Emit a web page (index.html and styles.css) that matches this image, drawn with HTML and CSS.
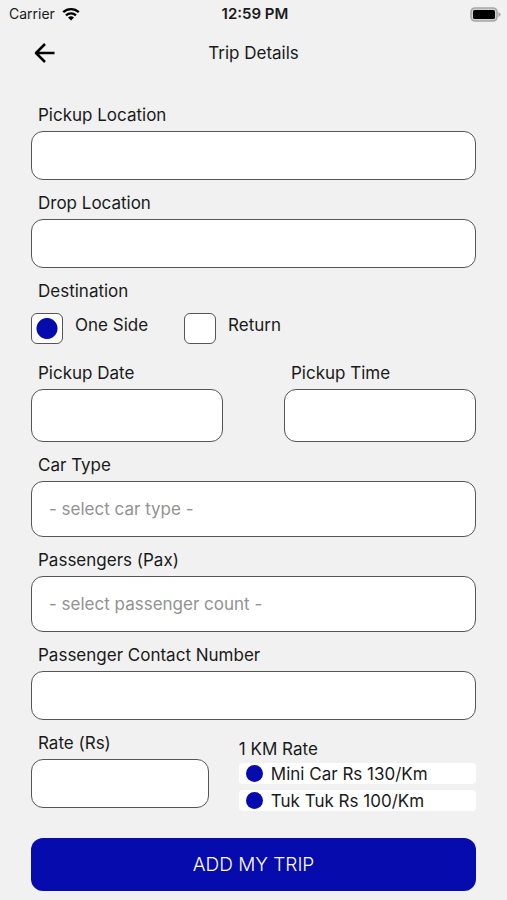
FILE: index.html
```html
<!DOCTYPE html>
<html lang="en">
<head>
<meta charset="utf-8">
<meta name="viewport" content="width=device-width, initial-scale=1">
<title>Trip Details</title>
<link rel="stylesheet" href="styles.css">
</head>
<body>
<div class="status">
  <div class="carrier">
    <span>Carrier</span>
    <svg class="wifi" viewBox="0 0 18 14" aria-hidden="true">
      <path d="M1.2 5.2a11.2 11.2 0 0 1 15.6 0M4 8.3a7.2 7.2 0 0 1 10 0" fill="none" stroke="#000" stroke-width="2.3"/>
      <path d="M9 13.6L6 10.6a4.3 4.3 0 0 1 6 0z"/>
    </svg>
  </div>
  <div class="clock">12:59 PM</div>
  <svg class="battery" viewBox="0 0 31 15" aria-hidden="true">
    <rect x="1" y="1" width="26" height="13" rx="4" fill="#d0d0d0" stroke="#a6a6a6" stroke-width="1.6"/>
    <rect x="3" y="3" width="22" height="9" rx="1.6"/>
    <path d="M28.4 5v5q2.2-.8 2.2-2.5T28.4 5z" fill="#a6a6a6"/>
  </svg>
</div>
<header class="header">
  <button class="back" type="button" aria-label="Back">
    <svg viewBox="0 0 22 22" aria-hidden="true"><path d="M20.5 11H2.5M11 2L2 11l9 9" fill="none" stroke="#000" stroke-width="2.5" stroke-linejoin="round"/></svg>
  </button>
  <h1 class="title">Trip Details</h1>
</header>
<form class="form">
  <div class="field">
    <label for="pickup">Pickup Location</label>
    <input class="box" id="pickup" type="text">
  </div>
  <div class="field">
    <label for="drop">Drop Location</label>
    <input class="box" id="drop" type="text">
  </div>
  <fieldset class="destination">
    <legend>Destination</legend>
    <div class="choices">
      <label class="choice"><input type="radio" name="destination" checked>One Side</label>
      <label class="choice"><input type="radio" name="destination">Return</label>
    </div>
  </fieldset>
  <div class="when">
    <div class="field">
      <label for="date">Pickup Date</label>
      <input class="box box-medium" id="date" type="text">
    </div>
    <div class="field">
      <label for="time">Pickup Time</label>
      <input class="box box-medium" id="time" type="text">
    </div>
  </div>
  <div class="field">
    <label for="car">Car Type</label>
    <select class="box box-tall" id="car"><option>- select car type -</option></select>
  </div>
  <div class="field">
    <label for="pax">Passengers (Pax)</label>
    <select class="box box-tall" id="pax"><option>- select passenger count -</option></select>
  </div>
  <div class="field">
    <label for="contact">Passenger Contact Number</label>
    <input class="box" id="contact" type="tel">
  </div>
  <div class="pricing">
    <div class="field">
      <label for="rate">Rate (Rs)</label>
      <input class="box" id="rate" type="text">
    </div>
    <section class="rates">
      <h2>1 KM Rate</h2>
      <ul>
        <li>Mini Car Rs 130/Km</li>
        <li>Tuk Tuk Rs 100/Km</li>
      </ul>
    </section>
  </div>
  <button class="submit" type="button">ADD MY TRIP</button>
</form>
</body>
</html>
```
FILE: styles.css
```css
* {
  box-sizing: border-box;
}

body {
  margin: 0;
  background: #f1f1f1;
  color: #1a1a1a;
  font: 17px/24px Inter, "Liberation Sans", sans-serif;
}

h1,
h2,
ul,
fieldset,
legend {
  margin: 0;
  padding: 0;
  border: 0;
  font: inherit;
}

input,
select,
button {
  margin: 0;
  font: inherit;
}

.status {
  display: grid;
  grid-template-columns: 1fr auto 1fr;
  align-items: center;
  height: 28px;
  padding: 0 6px 0 9px;
  font-size: 14px;
}

.carrier {
  display: flex;
  align-items: center;
  gap: 7px;
}

.wifi {
  width: 18px;
  height: 14px;
}

.clock {
  font-size: 15px;
  font-weight: 600;
}

.battery {
  width: 31px;
  height: 15px;
  justify-self: end;
}

.header {
  display: grid;
  grid-template-columns: 1fr auto 1fr;
  align-items: center;
  height: 50px;
  padding: 0 34px;
}

.back {
  width: 22px;
  height: 22px;
  padding: 0;
  border: 0;
  background: none;
}

.back svg {
  display: block;
}

.form {
  display: flex;
  flex-direction: column;
  gap: 11px;
  padding: 25px 31px 10px;
}

.field {
  display: flex;
  flex-direction: column;
  gap: 4px;
}

.field label,
legend {
  padding-left: 7px;
}

.box {
  width: 100%;
  height: 49px;
  padding: 0 17px;
  border: 1px solid #555;
  border-radius: 12px;
  background: #fff;
  color: #929292;
  appearance: none;
}

.box-medium {
  height: 53px;
}

.box-tall {
  height: 56px;
}

.choices {
  display: flex;
  gap: 36px;
  padding: 10px 0 6px;
}

.choice {
  display: flex;
  gap: 12px;
}

.choice input {
  width: 32px;
  height: 31px;
  border: 1px solid #555;
  border-radius: 6px;
  background: #fff;
  appearance: none;
}

.choice input:checked {
  background: radial-gradient(circle, #060bad 10px, #fff 11px);
}

.when {
  display: grid;
  grid-template-columns: 1fr 1fr;
  gap: 61px;
}

.pricing {
  display: grid;
  grid-template-columns: 3fr 4fr;
  gap: 30px;
}

.rates {
  padding-top: 6px;
}

.rates ul {
  display: flex;
  flex-direction: column;
  gap: 6px;
  padding-top: 2px;
  list-style: none;
}

.rates li {
  display: flex;
  align-items: center;
  gap: 8px;
  height: 21px;
  padding-left: 7px;
  border-radius: 4px;
  background: #fff;
}

.rates li::before {
  content: "";
  width: 17px;
  height: 17px;
  border-radius: 50%;
  background: #060bad;
}

.submit {
  height: 53px;
  margin-top: 16px;
  border: 0;
  border-radius: 12px;
  background: #060bad;
  color: #fff;
  font-size: 19px;
  font-weight: 300;
}
```
